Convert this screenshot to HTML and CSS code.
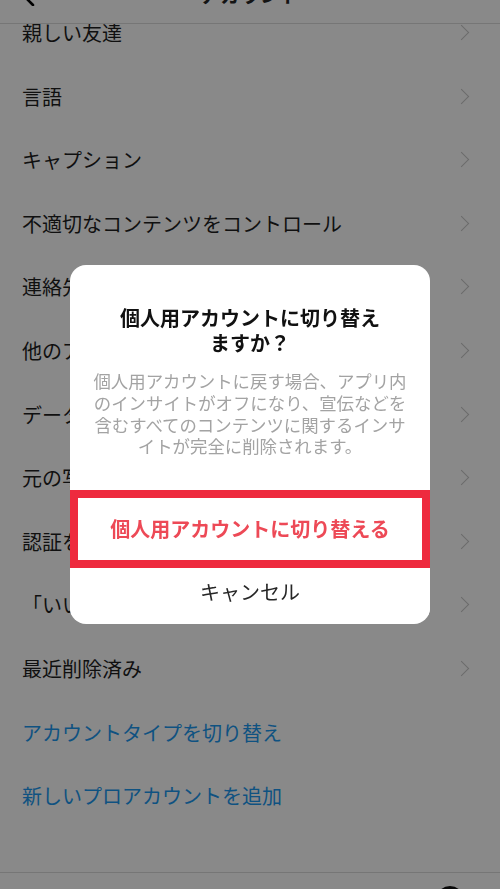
FILE: index.html
```html
<!DOCTYPE html>
<html lang="ja">
<head>
    <meta charset="UTF-8">
    <meta name="viewport" content="width=device-width, initial-scale=1.0">
    <title>アカウント</title>
    <link rel="stylesheet" href="styles.css">
</head>
<body>
    <div class="screen">
        <div class="top-bar">
            <div class="back">
                <svg width="14" height="22" viewBox="0 0 14 22"><polyline points="12,1 2,11 12,21" fill="none" stroke="#000" stroke-width="2.6" stroke-linecap="round" stroke-linejoin="round"/></svg>
            </div>
            <div class="title">アカウント</div>
            <div></div>
        </div>

        <ul class="settings">
            <li class="row">親しい友達<span class="arrow"></span></li>
            <li class="row">言語<span class="arrow"></span></li>
            <li class="row">キャプション<span class="arrow"></span></li>
            <li class="row">不適切なコンテンツをコントロール<span class="arrow"></span></li>
            <li class="row">連絡先の同期<span class="arrow"></span></li>
            <li class="row">他のアプリへのシェア<span class="arrow"></span></li>
            <li class="row">データ使用量<span class="arrow"></span></li>
            <li class="row">元の写真<span class="arrow"></span></li>
            <li class="row">認証をリクエスト<span class="arrow"></span></li>
            <li class="row">「いいね！」数とビュー数<span class="arrow"></span></li>
            <li class="row">最近削除済み<span class="arrow"></span></li>
            <li class="row link">アカウントタイプを切り替え</li>
            <li class="row link">新しいプロアカウントを追加</li>
        </ul>

        <div class="tab-bar">
            <div class="tab"></div>
            <div class="tab"></div>
            <div class="tab"></div>
            <div class="tab shop">
                <svg width="24" height="24" viewBox="0 0 24 24"><path d="M9 6 a3 3 0 0 1 6 0" fill="none" stroke="#262626" stroke-width="1.6"/></svg>
            </div>
            <div class="tab"><div class="avatar"></div></div>
        </div>
    </div>

    <div class="overlay">
        <div class="dialog">
            <div class="dialog-head">
                <h2 class="dialog-title">個人用アカウントに切り替えますか？</h2>
                <p class="dialog-text">個人用アカウントに戻す場合、アプリ内のインサイトがオフになり、宣伝などを含むすべてのコンテンツに関するインサイトが完全に削除されます。</p>
            </div>
            <button class="dialog-btn confirm-btn">個人用アカウントに切り替える</button>
            <button class="dialog-btn cancel-btn">キャンセル</button>
        </div>
    </div>
</body>
</html>
```

FILE: styles.css
```css
* {
    box-sizing: border-box;
}
body {
    font-family: "Noto Sans CJK JP", "Noto Sans", sans-serif;
    background-color: #ffffff;
    color: #262626;
    margin: 0;
    width: 500px;
    height: 889px;
    overflow: hidden;
}
.screen {
    height: 889px;
    display: flex;
    flex-direction: column;
}
.top-bar {
    height: 24px;
    flex-shrink: 0;
    border-bottom: 1px solid #dbdbdb;
    display: flex;
    align-items: flex-start;
    justify-content: space-between;
    overflow: hidden;
    position: relative;
    z-index: 1;
}
.top-bar > div {
    width: 60px;
}
.back {
    padding-left: 21px;
    margin-top: -16px;
    height: 22px;
}
.top-bar .title {
    flex: 1;
    width: auto;
    text-align: center;
    font-size: 20px;
    font-weight: bold;
    line-height: 24px;
    margin-top: -17px;
}
.settings {
    list-style: none;
    margin: -23.2px 0 0;
    padding: 0;
    flex: 1;
}
.row {
    height: 63.6px;
    display: flex;
    align-items: center;
    justify-content: space-between;
    padding: 0 30px 0 22px;
    font-size: 20px;
    color: #1e1e1e;
}
.row.link {
    color: #1d99f0;
}
.arrow {
    width: 11px;
    height: 11px;
    border-top: 1.6px solid #c7c7c7;
    border-right: 1.6px solid #c7c7c7;
    transform: rotate(45deg);
    margin-right: 3px;
}
.tab-bar {
    height: 17px;
    flex-shrink: 0;
    border-top: 1px solid #dbdbdb;
    display: flex;
    justify-content: space-around;
    align-items: flex-start;
    overflow: hidden;
}
.tab {
    width: 100px;
    display: flex;
    justify-content: center;
    padding-top: 12px;
}
.tab.shop {
    padding-top: 14px;
}
.avatar {
    width: 28px;
    height: 28px;
    border-radius: 50%;
    background-color: #111;
    margin-top: 1px;
}
.overlay {
    position: fixed;
    inset: 0;
    background-color: rgba(0, 0, 0, 0.463);
    display: flex;
    align-items: center;
    justify-content: center;
    z-index: 5;
}
.dialog {
    width: 360px;
    background-color: #ffffff;
    border-radius: 16px;
    overflow: hidden;
    display: flex;
    flex-direction: column;
}
.dialog-head {
    padding: 40px 22px 33px;
    text-align: center;
}
.dialog-title {
    margin: 0 auto;
    max-width: 270px;
    font-size: 20px;
    line-height: 25px;
    font-weight: bold;
    color: #111;
}
.dialog-text {
    margin: 15px 0 0;
    font-size: 17.4px;
    line-height: 21.7px;
    color: #a3a3a3;
}
.dialog-btn {
    font-family: inherit;
    font-size: 20px;
    background: #ffffff;
    border: none;
    cursor: pointer;
}
.confirm-btn {
    height: 78px;
    border: 8px solid #ee2a3e;
    color: #ed4956;
    font-weight: bold;
}
.cancel-btn {
    height: 48px;
    margin-bottom: 8px;
    color: #262626;
}
```
